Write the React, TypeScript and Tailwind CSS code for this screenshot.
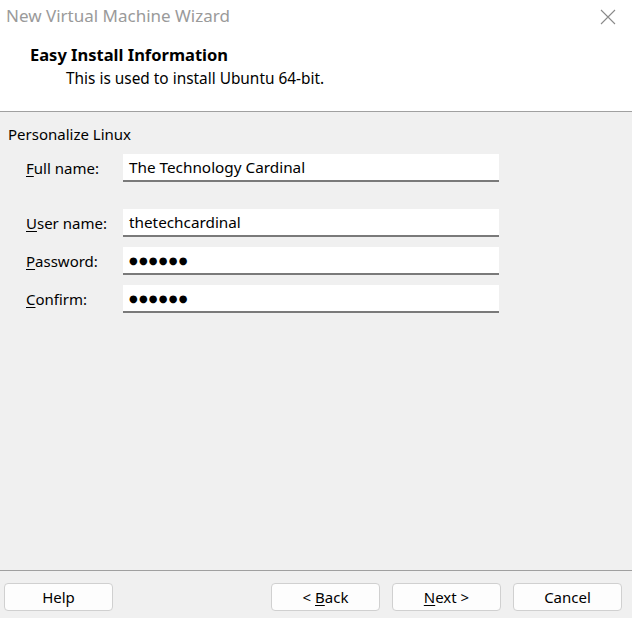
export default function App() {
  const fields = [
    { label: "Full name:", key: "F", rest: "ull name:", value: "The Technology Cardinal", mt: "mt-0" },
    { label: "User name:", key: "U", rest: "ser name:", value: "thetechcardinal", mt: "mt-[27px]" },
    { label: "Password:", key: "P", rest: "assword:", value: "●●●●●●", mt: "mt-[10px]" },
    { label: "Confirm:", key: "C", rest: "onfirm:", value: "●●●●●●", mt: "mt-[10px]" },
  ];

  return (
    <div className="w-[632px] h-[618px] bg-[#f0f0f0] flex flex-col text-black overflow-hidden" style={{ fontFamily: '"Noto Sans", "DejaVu Sans", sans-serif' }}>
      {/* header */}
      <div className="bg-white h-[112px] border-b border-[#a0a0a0] relative">
        <div className="flex items-center justify-between pl-[6px] pr-[16px] pt-[3px]">
          <span className="text-[17px] text-[#9a9a9a]">New Virtual Machine Wizard</span>
          <svg width="16" height="16" viewBox="0 0 16 16" className="mt-[3px]">
            <path d="M1 1 L15 15 M15 1 L1 15" stroke="#8a8a8a" strokeWidth="1.1" fill="none" />
          </svg>
        </div>
        <div className="pl-[30px] pt-[16px] text-[16.5px] font-bold leading-[20px]">Easy Install Information</div>
        <div className="pl-[66px] pt-[4px] text-[15.4px] leading-[20px]">This is used to install Ubuntu 64-bit.</div>
      </div>

      {/* body */}
      <div className="flex-1 px-[8px] pt-[12px]">
        <div className="text-[15px] leading-[20px]">Personalize Linux</div>
        <div className="mt-[10px] flex flex-col">
          {fields.map((f) => (
            <div key={f.label} className={`flex items-center ${f.mt}`}>
              <div className="w-[115px] pl-[18px] text-[15px]">
                <span className="underline underline-offset-2">{f.key}</span>
                {f.rest}
              </div>
              <div className="w-[376px] h-[28px] bg-white border-b-2 border-[#7a7a7a] flex items-center pl-[6px] text-[15.3px]">
                {f.value.startsWith("●") ? (
                  <span className="text-[10px] tracking-[1.2px]">{f.value}</span>
                ) : (
                  f.value
                )}
              </div>
            </div>
          ))}
        </div>
      </div>

      {/* footer */}
      <div className="border-t border-[#a0a0a0] h-[48px] flex items-start pt-[12px] px-[4px]">
        <button className="w-[109px] h-[28px] bg-[#fdfdfd] border border-[#d0d0d0] rounded-[4px] text-[15px]">Help</button>
        <div className="flex-1" />
        <div className="flex gap-[12px] pr-[6px]">
          <button className="w-[109px] h-[28px] bg-[#fdfdfd] border border-[#d0d0d0] rounded-[4px] text-[15px]">
            &lt; <span className="underline underline-offset-2">B</span>ack
          </button>
          <button className="w-[109px] h-[28px] bg-[#fdfdfd] border border-[#d0d0d0] rounded-[4px] text-[15px]">
            <span className="underline underline-offset-2">N</span>ext &gt;
          </button>
          <button className="w-[109px] h-[28px] bg-[#fdfdfd] border border-[#d0d0d0] rounded-[4px] text-[15px]">Cancel</button>
        </div>
      </div>
    </div>
  );
}
